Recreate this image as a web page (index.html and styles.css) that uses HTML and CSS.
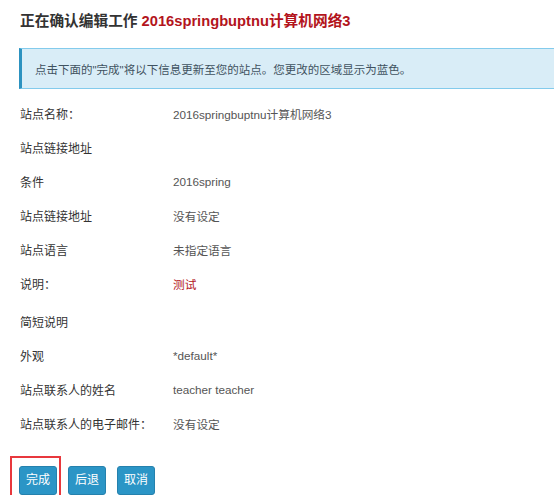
FILE: index.html
```html
<!DOCTYPE html>
<html lang="zh-CN">
<head>
<meta charset="utf-8">
<link rel="stylesheet" href="styles.css">
</head>
<body>
<div class="page">
  <h2 class="title">正在确认编辑工作 <span class="title-name">2016springbuptnu计算机网络3</span></h2>
  <div class="alert">点击下面的"完成"将以下信息更新至您的站点。您更改的区域显示为蓝色。</div>
  <div class="rows">
    <div class="row"><span class="label">站点名称：</span><span class="value">2016springbuptnu计算机网络3</span></div>
    <div class="row"><span class="label">站点链接地址</span><span class="value"></span></div>
    <div class="row"><span class="label">条件</span><span class="value">2016spring</span></div>
    <div class="row"><span class="label">站点链接地址</span><span class="value">没有设定</span></div>
    <div class="row"><span class="label">站点语言</span><span class="value">未指定语言</span></div>
    <div class="row row-tall"><span class="label">说明：</span><span class="value value-red">测试</span></div>
    <div class="row"><span class="label">简短说明</span><span class="value"></span></div>
    <div class="row"><span class="label">外观</span><span class="value">*default*</span></div>
    <div class="row"><span class="label">站点联系人的姓名</span><span class="value">teacher teacher</span></div>
    <div class="row"><span class="label">站点联系人的电子邮件：</span><span class="value">没有设定</span></div>
  </div>
  <div class="actions">
    <span class="highlight-wrap"><button class="btn">完成</button><span class="highlight"></span></span>
    <button class="btn">后退</button>
    <button class="btn">取消</button>
  </div>
</div>
</body>
</html>
```
FILE: styles.css
```css
html, body {
  margin: 0;
  padding: 0;
  background: #ffffff;
}
body {
  font-family: "Liberation Sans", "Noto Sans CJK SC", sans-serif;
  font-size: 12px;
  color: #333333;
}
.page {
  padding: 12px 0 0 19px;
}
.title {
  margin: 0;
  font-size: 14.7px;
  line-height: 18px;
  font-weight: bold;
  color: #333333;
  padding-left: 1px;
}
.title-name {
  color: #b3141c;
}
.alert {
  margin-top: 18px;
  height: 39px;
  box-sizing: content-box;
  background: #d9edf7;
  border-top: 1px solid #83cbec;
  border-bottom: 1px solid #83cbec;
  border-left: 3px solid #2c92c0;
  display: flex;
  align-items: center;
  padding-left: 13px;
  font-size: 11.5px;
  color: #3f5260;
}
.rows {
  margin-top: 7px;
  display: flex;
  flex-direction: column;
}
.row {
  display: grid;
  grid-template-columns: 153px 1fr;
  height: 34px;
  align-items: center;
  padding-left: 1px;
}
.row-tall {
  padding-bottom: 4px;
}
.label {
  color: #333333;
}
.value {
  color: #555555;
  font-size: 11.7px;
}
.value-red {
  color: #b3141c;
}
.actions {
  margin-top: 26px;
  display: flex;
  gap: 11px;
}
.highlight-wrap {
  position: relative;
  display: inline-flex;
}
.highlight {
  position: absolute;
  left: -9px;
  top: -10px;
  width: 47px;
  height: 40px;
  border: 2px solid #e8383d;
}
.btn {
  height: 29px;
  padding: 0 6px;
  border: 1px solid #2581ad;
  border-radius: 3px;
  background: #2b95c6;
  color: #ffffff;
  font-family: "Liberation Sans", "Noto Sans CJK SC", sans-serif;
  font-size: 12px;
  line-height: 27px;
}
```
